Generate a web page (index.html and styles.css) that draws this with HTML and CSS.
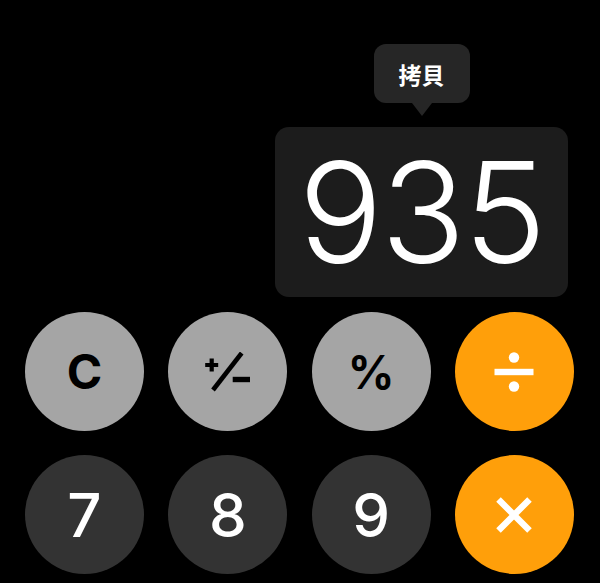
FILE: index.html
```html
<!DOCTYPE html>
<html>
<head>
<meta charset="utf-8">
<link rel="stylesheet" href="styles.css">
</head>
<body>
<div class="screen">
  <div class="top">
    <div class="readout">
      <div class="tooltip">拷貝</div>
      <div class="display">935</div>
    </div>
  </div>
  <div class="keypad">
    <div class="key light">C</div>
    <div class="key light">
      <svg width="48" height="40" viewBox="0 0 48 40">
        <path d="M7.7 6.5 V19.5 M1.2 13 H14.2" stroke="#000" stroke-width="4.2" fill="none"/>
        <path d="M37.7 1 L9 38" stroke="#000" stroke-width="4.6" fill="none"/>
        <path d="M28.7 27.5 H46" stroke="#000" stroke-width="5.4" fill="none"/>
      </svg>
    </div>
    <div class="key light pct">%</div>
    <div class="key orange">
      <svg width="40" height="40" viewBox="0 0 40 40">
        <circle cx="20" cy="5.5" r="5.2" fill="#fff"/>
        <rect x="0.5" y="16.8" width="39" height="6.4" fill="#fff"/>
        <circle cx="20" cy="34.5" r="5.2" fill="#fff"/>
      </svg>
    </div>
    <div class="key dark">7</div>
    <div class="key dark">8</div>
    <div class="key dark">9</div>
    <div class="key orange">
      <svg width="40" height="40" viewBox="0 0 40 40">
        <path d="M4.5 4.5 L35.5 35.5 M35.5 4.5 L4.5 35.5" stroke="#fff" stroke-width="6.4" fill="none"/>
      </svg>
    </div>
  </div>
</div>
</body>
</html>
```
FILE: styles.css
```css
html, body {
  margin: 0;
  padding: 0;
  background: #000;
}
.screen {
  width: 600px;
  height: 583px;
  background: #000;
  overflow: hidden;
  font-family: Inter, "Noto Sans CJK TC", sans-serif;
}
.top {
  display: flex;
  justify-content: flex-end;
  padding-top: 44px;
  padding-right: 32px;
}
.readout {
  display: flex;
  flex-direction: column;
  align-items: center;
}
.tooltip {
  position: relative;
  width: 96px;
  height: 59px;
  border-radius: 12px;
  background: #262626;
  color: #fff;
  font-family: "Noto Sans CJK TC", sans-serif;
  font-weight: 700;
  font-size: 23px;
  display: flex;
  align-items: center;
  justify-content: center;
  margin-bottom: 24px;
}
.tooltip::after {
  content: "";
  position: absolute;
  left: 50%;
  top: 100%;
  margin-left: -10px;
  border-left: 10px solid transparent;
  border-right: 10px solid transparent;
  border-top: 13px solid #262626;
}
.display {
  width: 293px;
  height: 170px;
  border-radius: 14px;
  background: #1c1c1c;
  color: #fff;
  font-family: Inter, sans-serif;
  font-weight: 300;
  font-size: 140px;
  line-height: 170px;
  text-align: center;
  letter-spacing: -2px;
}
.keypad {
  display: grid;
  grid-template-columns: repeat(4, 119px);
  column-gap: 24.3px;
  row-gap: 24px;
  padding-left: 25px;
  margin-top: 15px;
}
.key {
  width: 119px;
  height: 119px;
  border-radius: 50%;
  display: flex;
  align-items: center;
  justify-content: center;
}
.light {
  background: #a5a5a5;
  color: #000;
  font-weight: 700;
  font-size: 48px;
}
.pct {
  font-size: 46px;
}
.dark {
  background: #333333;
  color: #fff;
  font-weight: 500;
  font-size: 60px;
}
.orange {
  background: #ff9f0a;
}
```
